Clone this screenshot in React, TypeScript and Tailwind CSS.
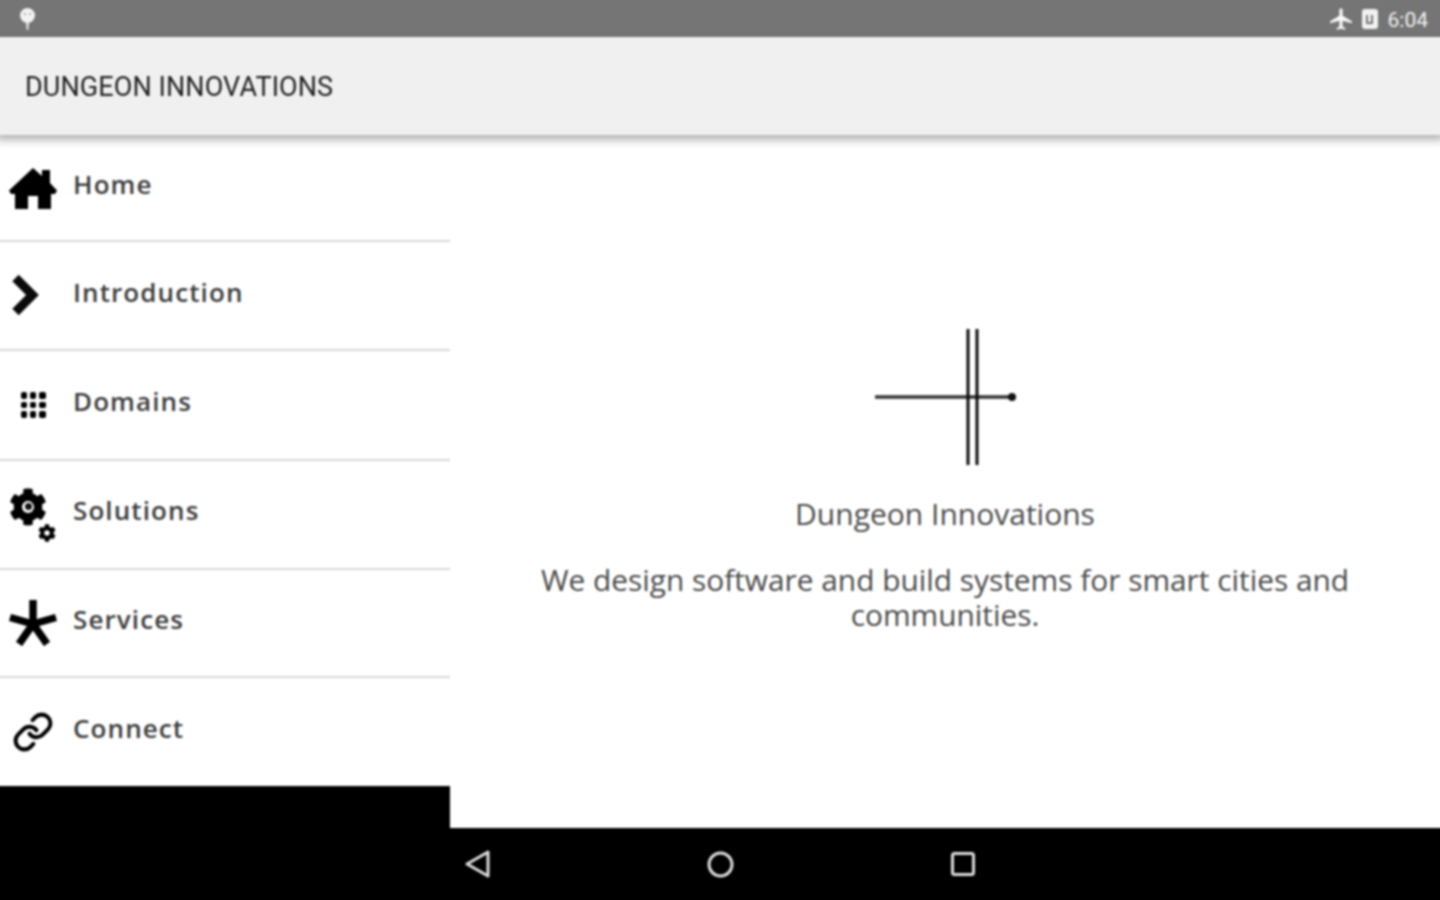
import React from "react";
import { FaCog } from "react-icons/fa";
import { MdAirplanemodeActive } from "react-icons/md";

function Home() {
  return (
    <svg width="48" height="42" viewBox="0 0 48 42" className="mt-[2px]">
      <path
        fill="#000000"
        d="M24 0L33 8V2H41V15L48 22.500L46 26H42V41H29V28H19V41H6V26H2L0 22.500Z"
      />
    </svg>
  );
}

function Chevron() {
  return (
    <svg width="30" height="42" viewBox="0 0 30 42" className="-ml-[15px] mt-[-1px]">
      <path d="M4.500 4L21.500 21L4.500 38" fill="none" stroke="#0a0a0a" strokeWidth="9" strokeLinejoin="miter" />
    </svg>
  );
}

function Grid() {
  const cells = [0, 1, 2, 3, 4, 5, 6, 7, 8];
  return (
    <div className="grid grid-cols-3 gap-[3px] w-[25px]">
      {cells.map((c) => (
        <div key={c} className="w-[6.500px] h-[6.500px] rounded-[2px] bg-[#000]" />
      ))}
    </div>
  );
}

function Gears() {
  return (
    <div className="relative w-[48px] h-[48px] -mt-[4px]">
      <FaCog className="absolute left-0 top-[-1px] text-[38px] text-[#000]" />
      <div className="absolute left-[15.500px] top-[14.500px] w-[7px] h-[7px] rounded-full bg-[#111]" />
      <FaCog className="absolute left-[29px] top-[35px] text-[18px] text-[#000]" />
    </div>
  );
}

function Star() {
  return (
    <svg width="48" height="46" viewBox="0 0 48 46">
      <g stroke="#000" strokeWidth="7.500" strokeLinecap="butt">
        <path d="M24 0V24" />
        <path d="M1 17.500L24 24" />
        <path d="M47 17.500L24 24" />
        <path d="M10 44L24 24" />
        <path d="M38 44L24 24" />
      </g>
    </svg>
  );
}

function Chain() {
  return (
    <svg width="42" height="42" viewBox="0 0 24 24" fill="none" stroke="#000" strokeWidth="2.300" strokeLinecap="round" strokeLinejoin="round">
      <path d="M10 13a5 5 0 0 0 7.540.540l3-3a5 5 0 0 0-7.070-7.070l-1.720 1.710" />
      <path d="M14 11a5 5 0 0 0-7.540-.540l-3 3a5 5 0 0 0 7.070 7.070l1.710-1.710" />
    </svg>
  );
}

const rows = [
  { label: "Home", h: "h-[107px]", mb: "mb-[7px]", icon: <Home /> },
  { label: "Introduction", h: "h-[109px]", mb: "mb-[7px]", icon: <Chevron /> },
  { label: "Domains", h: "h-[110px]", mb: "mb-[8px]", icon: <Grid /> },
  { label: "Solutions", h: "h-[109px]", mb: "mb-[9px]", icon: <Gears /> },
  { label: "Services", h: "h-[108px]", mb: "mb-[9px]", icon: <Star /> },
  { label: "Connect", h: "h-[108px]", mb: "mb-[9px]", icon: <Chain /> },
];

export default function App() {
  return (
    <div className="w-[1440px] h-[900px] overflow-hidden bg-black">
      <div className="w-[1448px] h-[908px] -ml-[4px] -mt-[4px] flex flex-col bg-black blur-[0.8px] font-['Open_Sans',sans-serif]">
        <div className="h-[41px] shrink-0 bg-[#757575] flex items-center justify-between pt-[4px] pl-[23px] pr-[16px]">
          <svg width="17" height="24" viewBox="0 0 17 24">
            <circle cx="8.500" cy="8.500" r="7.500" fill="#f2f2f2" />
            <path d="M7 15h3l-.7 8h-1.600z" fill="#e5e5e5" />
            <circle cx="6" cy="7" r="1" fill="#999" />
            <circle cx="11" cy="7" r="1" fill="#999" />
          </svg>
          <div className="flex items-center">
            <MdAirplanemodeActive className="mt-[1px] text-[26px] text-[#f8f8f8]" />
            <div className="ml-[8px] mt-[1px] w-[16px] h-[20px] rounded-[3px] bg-[#f2f2f2] flex items-center justify-center">
              <div className="w-[7px] h-[9px] border-b-2 border-x-2 border-[#757575]" />
            </div>
            <span className="ml-[10px] mt-[3px] text-[21px] leading-none text-[#f2f2f2] font-['Roboto',sans-serif]">6:04</span>
          </div>
        </div>

        <header className="relative z-10 h-[98px] shrink-0 bg-[#f0f0f0] flex items-center pl-[29px] shadow-[0_5px_8px_rgba(0,0,0,0.3)]">
          <h1 className="mt-[3px] text-[27px] leading-none tracking-[0.1px] text-[#222] font-['Roboto',sans-serif]">DUNGEON INNOVATIONS</h1>
        </header>

        <div className="flex-1 flex min-h-0">
          <nav className="w-[454px] shrink-0 bg-black">
            {rows.map((r, i) => (
              <div
                key={r.label}
                className={`${r.h} bg-white flex items-center pl-[4px] ${i < rows.length - 1 ? "border-b-2 border-[#d8d8d8]" : ""}`}
              >
                <div className="w-[48px] ml-[9px] flex items-center justify-center shrink-0">{r.icon}</div>
                <span className={`ml-[16px] ${r.mb} text-[26px] font-semibold leading-none tracking-[1.1px] text-[#3c3c3c]`}>
                  {r.label}
                </span>
              </div>
            ))}
          </nav>

          <div className="flex-1 flex flex-col min-w-0">
            <main className="flex-1 bg-white flex flex-col items-center pt-[194px] pr-[4px] text-[#4a4a4a]">
              <svg width="146" height="136" viewBox="0 0 146 136" className="shrink-0 ml-[4px]">
                <path d="M1 68H137" stroke="#333" strokeWidth="3.500" />
                <circle cx="138" cy="68" r="4" fill="#111" />
                <path d="M94 0V136M103 0V136" stroke="#0a0a0a" strokeWidth="3" />
              </svg>
              <h2 className="mt-[31px] text-[30px] leading-[35px]">Dungeon Innovations</h2>
              <p className="mt-[31px] w-[860px] text-center text-[29.850px] leading-[35px]">
                We design software and build systems for smart cities and communities.
              </p>
            </main>
            <div className="h-[76px] shrink-0 bg-black flex items-center pb-[4px] pl-[15px] gap-[216px]">
              <svg width="26" height="28" viewBox="0 0 26 28" fill="none" stroke="#dddddd" strokeWidth="3" strokeLinejoin="round">
                <path d="M23 2V26L2 14Z" />
              </svg>
              <svg width="27" height="27" viewBox="0 0 27 27" fill="none" stroke="#dddddd" strokeWidth="3">
                <circle cx="13.500" cy="13.500" r="11.500" />
              </svg>
              <svg width="26" height="26" viewBox="0 0 26 26" fill="none" stroke="#dddddd" strokeWidth="3">
                <rect x="2.500" y="2.500" width="21" height="21" rx="2" />
              </svg>
            </div>
          </div>
        </div>
      </div>
    </div>
  );
}
